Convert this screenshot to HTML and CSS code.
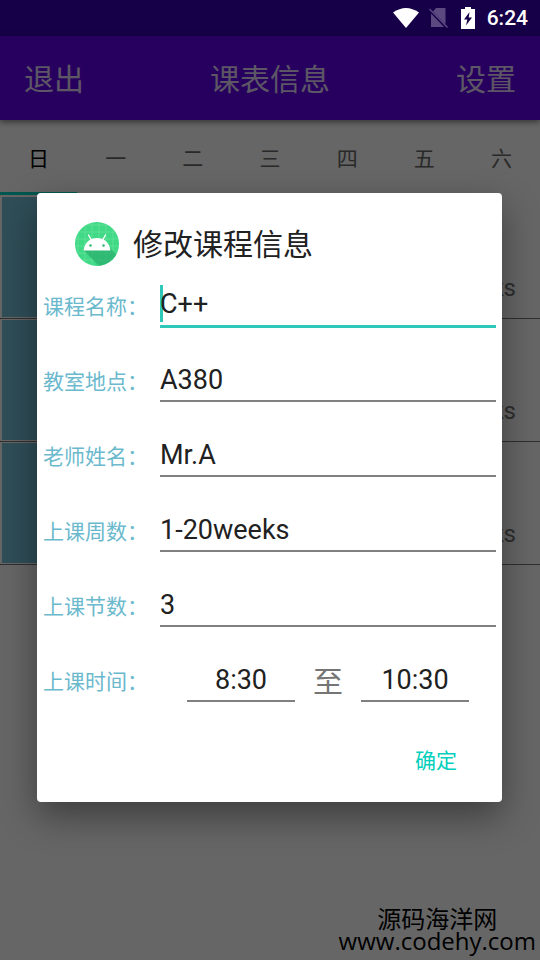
FILE: index.html
```html
<!DOCTYPE html>
<html lang="zh-CN">
<head>
<meta charset="utf-8">
<meta name="viewport" content="width=device-width, initial-scale=1">
<title>课表信息</title>
<link rel="stylesheet" href="styles.css">
</head>
<body>
<div class="status-bar">
  <svg class="wifi" viewBox="0 0 26 20" aria-hidden="true"><path fill="#fff" d="M0 4.500Q13-4.500 26 4.500L13 20Z"/></svg>
  <svg class="sim" viewBox="0 0 20 22" aria-hidden="true"><path fill="#5b4980" d="M7 1H16.500V17.500L4 4.500ZM2 6.500L15 20H2Z"/><path stroke="#5b4980" stroke-width="1.500" d="M.5 2L18.500 20.500"/></svg>
  <svg class="battery" viewBox="0 0 14 22" aria-hidden="true"><path fill="#fff" d="M4 0H10V2H14V22H0V2H4Z"/><path fill="#160048" d="M8.500 5L3 12.500H6.300L5 18.500L11 10.500H7.700Z"/></svg>
  <span>6:24</span>
</div>
<div class="screen">
  <header class="app-bar">
    <button type="button">退出</button>
    <h1>课表信息</h1>
    <button type="button">设置</button>
  </header>
  <nav class="tabs">
    <button type="button" class="selected">日</button>
    <button type="button">一</button>
    <button type="button">二</button>
    <button type="button">三</button>
    <button type="button">四</button>
    <button type="button">五</button>
    <button type="button">六</button>
  </nav>
  <ul class="courses">
    <li><span class="period"></span><span class="weeks">1-20weeks</span></li>
    <li><span class="period"></span><span class="weeks">1-20weeks</span></li>
    <li><span class="period"></span><span class="weeks">1-20weeks</span></li>
  </ul>
  <div class="backdrop">
    <form class="dialog" role="dialog" aria-labelledby="dialog-title">
      <div class="dialog-head">
        <svg class="logo" viewBox="0 0 44 44" aria-hidden="true">
          <defs><clipPath id="disc"><circle cx="22" cy="22" r="22"/></clipPath></defs>
          <g clip-path="url(#disc)">
            <path fill="#40d986" d="M0 0H44V44H0Z"/>
            <path stroke="#6ce3a2" stroke-width=".7" fill="none" d="M3 0V44M10 0V44M17 0V44M24 0V44M31 0V44M38 0V44M0 3H44M0 10H44M0 17H44M0 24H44M0 31H44M0 38H44"/>
            <path fill="#22a565" fill-opacity=".6" d="M8.500 28L25 45H44V35L34 25Z"/>
          </g>
          <path stroke="#fff" stroke-width="1.400" stroke-linecap="round" d="M13.500 13L17 19M30.500 13L27 19"/>
          <path fill="#fff" d="M8.500 28.500C9.500 20.500 15 16 22 16S34.500 20.500 35.500 28.500Z"/>
          <circle cx="15.500" cy="23.500" r="1.300" fill="#35b870"/><circle cx="28.500" cy="23.500" r="1.300" fill="#35b870"/>
        </svg>
        <h2 id="dialog-title">修改课程信息</h2>
      </div>
      <div class="row"><label for="name">课程名称：</label><div class="field active"><input id="name" type="text" value="C++"></div></div>
      <div class="row"><label for="room">教室地点：</label><div class="field"><input id="room" type="text" value="A380"></div></div>
      <div class="row"><label for="teacher">老师姓名：</label><div class="field"><input id="teacher" type="text" value="Mr.A"></div></div>
      <div class="row"><label for="weeks">上课周数：</label><div class="field"><input id="weeks" type="text" value="1-20weeks"></div></div>
      <div class="row"><label for="count">上课节数：</label><div class="field"><input id="count" type="text" value="3"></div></div>
      <div class="row">
        <label for="start">上课时间：</label>
        <div class="times">
          <div class="field"><input id="start" type="text" value="8:30"></div>
          <label class="to" for="end">至</label>
          <div class="field"><input id="end" type="text" value="10:30"></div>
        </div>
      </div>
      <div class="actions"><button type="button">确定</button></div>
    </form>
  </div>
  <div class="watermark"><span>源码海洋网</span><span class="site">www.codehy.com</span></div>
</div>
</body>
</html>
```

FILE: styles.css
```css
* {
  box-sizing: border-box;
}

body {
  margin: 0;
  min-height: 100vh;
  display: flex;
  flex-direction: column;
  background: #fff;
  font-family: Roboto, "Noto Sans CJK SC", sans-serif;
}

button {
  border: 0;
  padding: 0;
  background: none;
  font: inherit;
  color: inherit;
}

h1,
h2 {
  margin: 0;
  font-weight: 400;
}

.status-bar {
  height: 36px;
  padding: 0 12px;
  display: flex;
  align-items: center;
  justify-content: flex-end;
  background: #160048;
  color: #fff;
  font-size: 21px;
  font-weight: 500;
}

.wifi {
  width: 26px;
  height: 20px;
  margin-right: 10px;
}

.sim {
  width: 20px;
  height: 22px;
  margin-right: 12px;
}

.battery {
  width: 14px;
  height: 22px;
  margin-right: 12px;
}

.screen {
  position: relative;
  flex: 1;
}

.app-bar {
  height: 84px;
  padding: 0 24px 2px;
  display: flex;
  align-items: center;
  justify-content: space-between;
  background: #6200ee;
  color: rgba(255, 255, 255, 0.85);
  box-shadow: 0 2px 6px rgba(0, 0, 0, 0.5);
  font-size: 30px;
}

.app-bar h1 {
  font-size: 30px;
}

.tabs {
  height: 75px;
  display: grid;
  grid-template-columns: repeat(7, 1fr);
  color: #666;
  font-size: 21px;
}

.tabs button {
  padding-top: 1px;
  border-bottom: 3px solid transparent;
}

.tabs .selected {
  border-color: #03dac5;
  color: #000;
}

.courses {
  margin: 0;
  padding: 1px 0 0;
  list-style: none;
}

.courses li {
  height: 123px;
  padding: 1px 24px 1px 2px;
  display: flex;
  justify-content: space-between;
  align-items: flex-end;
  border-bottom: 1px solid #777;
}

.period {
  width: 120px;
  align-self: stretch;
  background: #75c4dd;
}

.weeks {
  padding-bottom: 15px;
  color: #757575;
  font-size: 24px;
  line-height: 28px;
}

.backdrop {
  position: absolute;
  inset: 0;
  padding: 0 38px 2px 37px;
  display: flex;
  align-items: center;
  background: rgba(0, 0, 0, 0.6);
}

.dialog {
  width: 100%;
  padding: 27px 6px 18px;
  border-radius: 4px;
  background: #fff;
  color: #212121;
  box-shadow: 0 14px 36px rgba(0, 0, 0, 0.4);
}

.dialog-head {
  height: 48px;
  padding-left: 32px;
  display: flex;
  align-items: center;
  gap: 14px;
}

.dialog-head h2 {
  padding-top: 2px;
  font-size: 30px;
  line-height: 44px;
}

.logo {
  width: 44px;
  height: 44px;
}

.row {
  height: 75px;
  display: flex;
  align-items: center;
}

.row label {
  width: 117px;
  color: #6bb9cd;
  font-size: 21px;
}

.field {
  flex: 1;
  height: 44px;
  border-bottom: 2px solid #808080;
}

.field input {
  position: relative;
  display: block;
  width: 100%;
  height: 42px;
  padding: 2px 0 0;
  border: 0;
  outline: 0;
  background: none;
  color: inherit;
  font: 27px Roboto, "Noto Sans CJK SC", sans-serif;
}

.row > .active {
  position: relative;
  height: 46px;
  border-bottom: 3px solid #2fc8b8;
}

.active::before {
  content: "";
  position: absolute;
  left: 0;
  top: 3px;
  width: 3px;
  height: 37px;
  background: #2fc8b8;
}

.times {
  flex: 1;
  display: flex;
  justify-content: center;
  align-items: center;
}

.times .field {
  flex: 0 0 108px;
}

.times input {
  text-align: center;
}

.times .to {
  width: 66px;
  padding-top: 3px;
  color: #757575;
  font-size: 30px;
  line-height: 44px;
  text-align: center;
}

.actions {
  height: 66px;
  display: flex;
  justify-content: flex-end;
  align-items: center;
  padding: 16px 39px 0 0;
  color: #03d0bc;
  font-size: 21px;
}

.watermark {
  position: absolute;
  right: 4px;
  bottom: 10px;
  display: flex;
  flex-direction: column;
  align-items: center;
  color: #000;
  font-size: 24px;
  line-height: 24px;
}

.site {
  font-family: "Open Sans", "Noto Sans", sans-serif;
  line-height: 18px;
}
```
